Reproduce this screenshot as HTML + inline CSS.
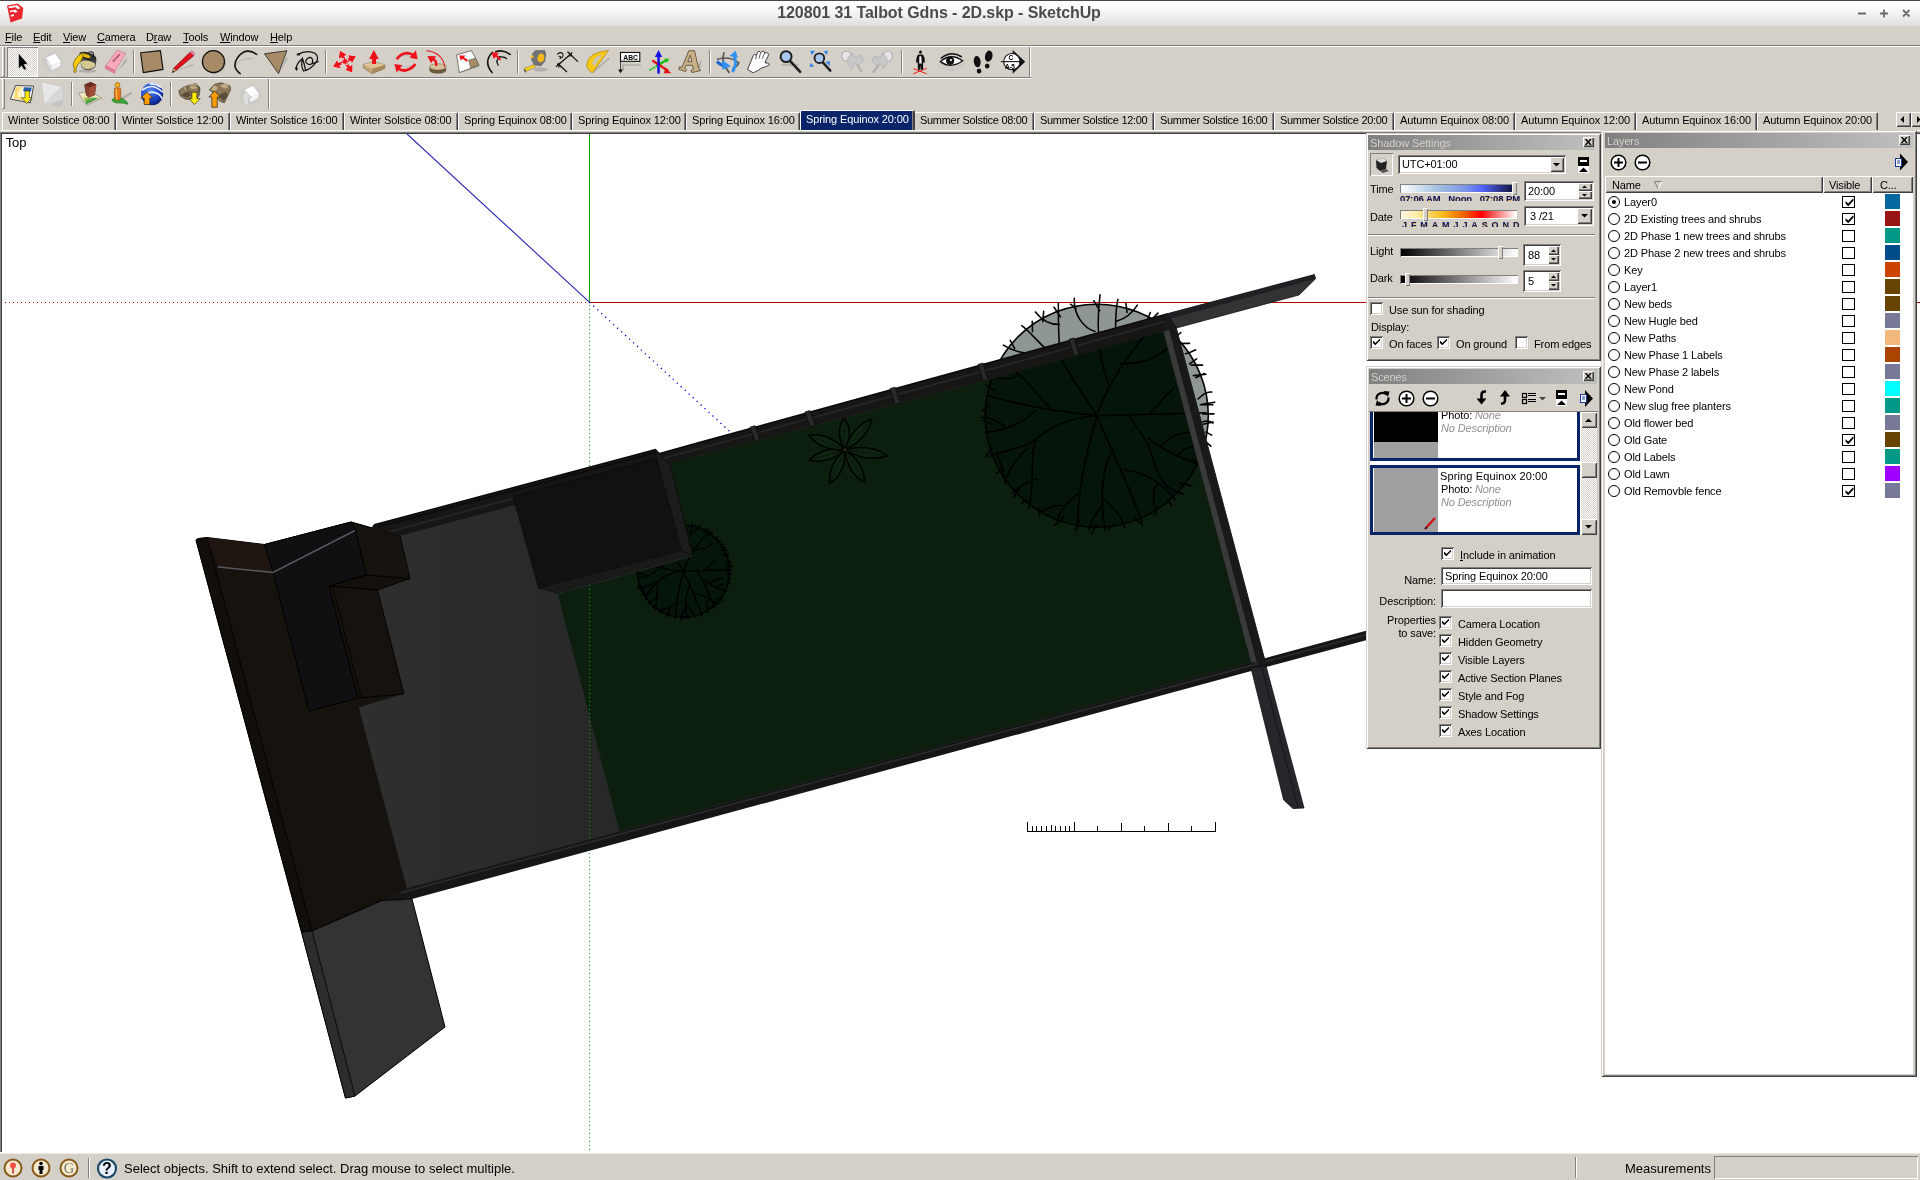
<!DOCTYPE html>
<html lang="en">
<head>
<meta charset="utf-8">
<title>120801 31 Talbot Gdns - 2D.skp - SketchUp</title>
<style>
*{box-sizing:border-box;margin:0;padding:0}
html,body{width:1920px;height:1180px;overflow:hidden;background:#d4d0c8}
#root{position:absolute;left:0;top:0;width:1920px;height:1180px;will-change:transform}
body{position:relative;font-family:"Liberation Sans",sans-serif;font-size:11px;color:#000;line-height:13px;letter-spacing:-0.12px}
.abs{position:absolute}
.t{position:absolute;white-space:nowrap;line-height:13px;height:13px}
u{text-decoration:underline;text-underline-offset:1px}
/* title bar */
#title{position:absolute;left:0;top:0;width:1920px;height:26px;background:linear-gradient(#fff 0,#fdfdfd 20%,#efefef 60%,#dedede 100%);border-top:1px solid #484848}
#title .cap{position:absolute;left:0;width:1878px;top:3px;text-align:center;font-weight:bold;font-size:16px;line-height:18px;color:#4b4b4b;letter-spacing:-0.08px}
/* menu */
#menu{position:absolute;left:0;top:26px;width:1920px;height:20px;background:#d4d0c8}
#menu span{position:absolute;top:5px;font-size:11px;line-height:13px}
.groove{position:absolute;left:0;width:1920px;height:2px;border-top:1px solid #808080;border-bottom:1px solid #fff}
.vsep{position:absolute;width:2px;border-left:1px solid #808080;border-right:1px solid #fff}
.raised{box-shadow:inset 1px 1px #fff,inset -1px -1px #404040,inset 2px 2px #d4d0c8,inset -2px -2px #808080;background:#d4d0c8}
.raised1{box-shadow:inset 1px 1px #fff,inset -1px -1px #808080;background:#d4d0c8}
.sunken{box-shadow:inset 1px 1px #808080,inset -1px -1px #fff,inset 2px 2px #404040,inset -2px -2px #d4d0c8;background:#fff}
.sunken1{box-shadow:inset 1px 1px #808080,inset -1px -1px #fff}
.panel{position:absolute;background:#d4d0c8;box-shadow:inset 1px 1px #d4d0c8,inset -1px -1px #404040,inset 2px 2px #fff,inset -2px -2px #808080}
.ptitle{position:absolute;height:15px;background:linear-gradient(90deg,#808080,#c0c0c0);color:#d4d0c8;font-size:11px;line-height:17px;padding-left:2px;overflow:hidden}
.xbtn{position:absolute;width:11px;height:10px;background:#d4d0c8;box-shadow:inset 1px 1px #fff,inset -1px -1px #404040,inset -2px -2px #808080}
.cb{position:absolute;width:13px;height:13px;background:#fff;box-shadow:inset 1px 1px #808080,inset -1px -1px #fff,inset 2px 2px #404040,inset -2px -2px #d4d0c8}
.cb svg,.lcb svg{position:absolute;left:3px;top:3px}
.lcb{position:absolute;width:13px;height:12px;background:#fff;border:1px solid #000}
.lcb svg{left:2px;top:1px}
.sw{position:absolute;left:1885px;width:15px;height:15px}
.rad{position:absolute;left:1608px;width:12px;height:12px;border:1px solid #000;border-radius:50%;background:#fff}
.rad.on::after{content:"";position:absolute;left:3px;top:3px;width:4px;height:4px;border-radius:50%;background:#000}
.tab{position:absolute;top:112px;height:18px;background:#d4d0c8;border-top:1px solid #fff;border-left:1px solid #fff;border-right:1px solid #404040;box-shadow:inset -1px 0 #808080;border-radius:2px 2px 0 0;padding-left:5px;line-height:14px}
.tab.sel{top:110px;height:20px;background:#0a246a;color:#fff;border:1px solid #fff;border-right:2px solid #404040;border-bottom:none;z-index:2;padding-top:1px;padding-left:5px}
.tab.su{letter-spacing:-0.3px}
.ico{position:absolute;width:24px;height:24px}
.spinb{position:absolute;width:11px;background:#d4d0c8;box-shadow:inset 1px 1px #fff,inset -1px -1px #404040,inset -2px -2px #808080}
</style>
</head>
<body>
<div id="root">
<svg class="abs" style="left:0;top:0" width="1920" height="1180" viewBox="0 0 1920 1180">
<defs><clipPath id="vp"><rect x="2" y="134" width="1918" height="1018"/></clipPath>
<clipPath id="lawnc"><polygon points="667.0,463.5 700.0,455.6 1000.0,376.7 1163.6,331.4 1251.0,662.0 620.0,831.0 558.0,593.0 692.7,555.6 669.0,466.0"/></clipPath>
<linearGradient id="pav" x1="0" y1="0" x2="1" y2="0"><stop offset="0" stop-color="#2f2f2f"/><stop offset="1" stop-color="#272727"/></linearGradient>
</defs>
<rect x="0" y="132" width="1920" height="1021" fill="#fff"/>
<g clip-path="url(#vp)">
<line x1="589.5" y1="134" x2="589.5" y2="302" stroke="#00a000" stroke-width="1"/>
<line x1="590" y1="302.5" x2="1920" y2="302.5" stroke="#b40000" stroke-width="1"/>
<line x1="590" y1="302.5" x2="2" y2="302.5" stroke="#d00000" stroke-width="1" stroke-dasharray="1 3"/>
<line x1="407.1" y1="134" x2="589.4" y2="302.2" stroke="#2424b4" stroke-width="1.1"/>
<line x1="589.4" y1="302.2" x2="730" y2="431.7" stroke="#0808c8" stroke-width="1.4" stroke-dasharray="1.2 4.2"/>
<g transform="translate(1096.8,415.7) scale(0.22895) translate(-598,-593)" fill="none" stroke="#000" stroke-width="6.77" stroke-linecap="round"><circle cx="598" cy="593" r="487" fill="#8f9793"/><path d="M598,593C630,500 680,400 790,262S880,195 905,175M650,455C620,380 590,250 612,65M700,365C780,370 860,340 905,300M598,593C540,500 450,380 440,330S430,200 430,100M598,593C500,580 350,570 120,505M598,593C480,600 380,650 340,690S330,900 300,1000M340,690C280,740 200,740 130,770M410,575C350,520 300,440 240,400M330,570C280,620 200,660 110,665M598,593C570,700 520,850 512,1085M598,593C640,700 720,850 795,1055M670,740C620,820 610,950 635,1095M598,593C700,590 900,585 1075,580M740,595C800,680 820,700 850,800S920,920 975,935M830,585C870,540 900,500 935,470M820,690C900,750 960,780 1030,800M720,830C800,840 880,880 940,960M880,725C920,680 960,670 1010,665M950,770C970,740 1000,730 1020,728M850,990C840,930 850,900 865,890M345,1020C400,980 430,985 450,985M425,1050C440,1000 480,960 515,935M565,1090C580,1040 600,1010 615,995M720,1080C700,1020 660,980 625,955M230,930C260,900 300,880 335,870M195,880C220,820 260,760 300,735M160,760C180,800 190,830 200,890M95,600C140,600 170,620 195,640M150,420C200,440 240,430 255,415M500,80C495,150 540,210 590,225M690,85C680,130 680,170 680,215M775,110C750,150 720,170 685,180M330,140C360,180 400,195 435,195M270,200C300,220 340,270 375,300M190,285C230,310 260,315 280,318M865,145L845,165M965,230L945,245M1030,305C1010,315 1000,320 985,322M1060,372L1010,372M1075,412L1020,418M1100,490C1080,485 1060,500 1040,520M1105,545L1050,545M1110,585L1060,585M1105,625C1090,615 1075,615 1060,620M1100,678L1075,665M1053,689L1096,726M1017,785L1053,800M960,888L1014,900M906,957L924,985M860,992L853,1028M763,1042L797,1068M668,1067L649,1089M597,1070L574,1111M523,1047L505,1094M457,1031L414,1072M347,996L348,1033M289,961L269,976M258,912L237,947M189,826L160,844M139,735L112,774M137,628L99,613M131,548L99,572M151,483L114,458M192,376L148,362M239,299L220,264M317,226L316,181M362,182L366,137M439,161L411,119M508,124L483,106M611,134L585,91M730,142L725,102M815,184L832,142M864,217L887,185M959,278L1003,277M1003,367L1034,345M1030,427L1068,409M1058,543L1113,534M1062,630L1106,621"/></g>
<polygon points="196.0,540.0 198.0,538.5 207.0,537.5 264.5,544.5 351.0,522.0 372.0,528.0 400.0,536.0 410.0,578.5 377.5,590.0 404.0,694.0 359.0,707.5 407.0,888.0 382.0,900.0 312.0,931.0 301.5,932.0" fill="#16120d" stroke="#000" stroke-width="1"/>
<polygon points="196.0,540.0 207.0,537.5 312.0,931.0 301.5,932.0" fill="#120e0a" stroke="#000" stroke-width="0.8"/>
<polygon points="207.0,537.5 264.5,544.5 273.0,572.5 218.0,567.0" fill="#1f1611"/>
<polygon points="400.0,536.0 515.0,505.0 513.0,496.5 538.5,587.8 558.0,593.0 620.0,831.0 407.0,888.0 359.0,707.5 404.0,694.0 377.5,590.0 410.0,578.5" fill="url(#pav)" stroke="#292929" stroke-width="1"/>
<polygon points="667.0,463.5 700.0,455.6 1000.0,376.7 1163.6,331.4 1251.0,662.0 620.0,831.0 558.0,593.0 692.7,555.6 669.0,466.0" fill="#0c1f0e" stroke="#0c1f0e" stroke-width="1"/>
<line x1="589.5" y1="305" x2="589.5" y2="1153" stroke="#00b400" stroke-width="1" stroke-dasharray="1 3"/>
<g clip-path="url(#lawnc)">
<g transform="translate(1096.8,415.7) scale(0.22895) translate(-598,-593)" fill="none" stroke="#000" stroke-width="6.77" stroke-linecap="round"><circle cx="598" cy="593" r="487" fill="#06150a"/><path d="M598,593C630,500 680,400 790,262S880,195 905,175M650,455C620,380 590,250 612,65M700,365C780,370 860,340 905,300M598,593C540,500 450,380 440,330S430,200 430,100M598,593C500,580 350,570 120,505M598,593C480,600 380,650 340,690S330,900 300,1000M340,690C280,740 200,740 130,770M410,575C350,520 300,440 240,400M330,570C280,620 200,660 110,665M598,593C570,700 520,850 512,1085M598,593C640,700 720,850 795,1055M670,740C620,820 610,950 635,1095M598,593C700,590 900,585 1075,580M740,595C800,680 820,700 850,800S920,920 975,935M830,585C870,540 900,500 935,470M820,690C900,750 960,780 1030,800M720,830C800,840 880,880 940,960M880,725C920,680 960,670 1010,665M950,770C970,740 1000,730 1020,728M850,990C840,930 850,900 865,890M345,1020C400,980 430,985 450,985M425,1050C440,1000 480,960 515,935M565,1090C580,1040 600,1010 615,995M720,1080C700,1020 660,980 625,955M230,930C260,900 300,880 335,870M195,880C220,820 260,760 300,735M160,760C180,800 190,830 200,890M95,600C140,600 170,620 195,640M150,420C200,440 240,430 255,415M500,80C495,150 540,210 590,225M690,85C680,130 680,170 680,215M775,110C750,150 720,170 685,180M330,140C360,180 400,195 435,195M270,200C300,220 340,270 375,300M190,285C230,310 260,315 280,318M865,145L845,165M965,230L945,245M1030,305C1010,315 1000,320 985,322M1060,372L1010,372M1075,412L1020,418M1100,490C1080,485 1060,500 1040,520M1105,545L1050,545M1110,585L1060,585M1105,625C1090,615 1075,615 1060,620M1100,678L1075,665M1053,689L1096,726M1017,785L1053,800M960,888L1014,900M906,957L924,985M860,992L853,1028M763,1042L797,1068M668,1067L649,1089M597,1070L574,1111M523,1047L505,1094M457,1031L414,1072M347,996L348,1033M289,961L269,976M258,912L237,947M189,826L160,844M139,735L112,774M137,628L99,613M131,548L99,572M151,483L114,458M192,376L148,362M239,299L220,264M317,226L316,181M362,182L366,137M439,161L411,119M508,124L483,106M611,134L585,91M730,142L725,102M815,184L832,142M864,217L887,185M959,278L1003,277M1003,367L1034,345M1030,427L1068,409M1058,543L1113,534M1062,630L1106,621"/></g>
<g transform="translate(683.5,571.2) scale(0.09446) translate(-598,-593)" fill="none" stroke="#000" stroke-width="14.29" stroke-linecap="round"><circle cx="598" cy="593" r="487" fill="#06150a"/><path d="M598,593C630,500 680,400 790,262S880,195 905,175M650,455C620,380 590,250 612,65M700,365C780,370 860,340 905,300M598,593C540,500 450,380 440,330S430,200 430,100M598,593C500,580 350,570 120,505M598,593C480,600 380,650 340,690S330,900 300,1000M340,690C280,740 200,740 130,770M410,575C350,520 300,440 240,400M330,570C280,620 200,660 110,665M598,593C570,700 520,850 512,1085M598,593C640,700 720,850 795,1055M670,740C620,820 610,950 635,1095M598,593C700,590 900,585 1075,580M740,595C800,680 820,700 850,800S920,920 975,935M830,585C870,540 900,500 935,470M820,690C900,750 960,780 1030,800M720,830C800,840 880,880 940,960M880,725C920,680 960,670 1010,665M950,770C970,740 1000,730 1020,728M850,990C840,930 850,900 865,890M345,1020C400,980 430,985 450,985M425,1050C440,1000 480,960 515,935M565,1090C580,1040 600,1010 615,995M720,1080C700,1020 660,980 625,955M230,930C260,900 300,880 335,870M195,880C220,820 260,760 300,735M160,760C180,800 190,830 200,890M95,600C140,600 170,620 195,640M150,420C200,440 240,430 255,415M500,80C495,150 540,210 590,225M690,85C680,130 680,170 680,215M775,110C750,150 720,170 685,180M330,140C360,180 400,195 435,195M270,200C300,220 340,270 375,300M190,285C230,310 260,315 280,318M865,145L845,165M965,230L945,245M1030,305C1010,315 1000,320 985,322M1060,372L1010,372M1075,412L1020,418M1100,490C1080,485 1060,500 1040,520M1105,545L1050,545M1110,585L1060,585M1105,625C1090,615 1075,615 1060,620M1100,678L1075,665M1053,689L1096,726M1017,785L1053,800M960,888L1014,900M906,957L924,985M860,992L853,1028M763,1042L797,1068M668,1067L649,1089M597,1070L574,1111M523,1047L505,1094M457,1031L414,1072M347,996L348,1033M289,961L269,976M258,912L237,947M189,826L160,844M139,735L112,774M137,628L99,613M131,548L99,572M151,483L114,458M192,376L148,362M239,299L220,264M317,226L316,181M362,182L366,137M439,161L411,119M508,124L483,106M611,134L585,91M730,142L725,102M815,184L832,142M864,217L887,185M959,278L1003,277M1003,367L1034,345M1030,427L1068,409M1058,543L1113,534M1062,630L1106,621"/></g>
</g>
<path d="M845,449.8Q854.4,431.9 843.9,417.8Q834.4,432.6 845,449.8Z" fill="#0e2310" stroke="#000" stroke-width="1.5"/><path d="M845,449.8L843.9,417.8" stroke="#06140a" stroke-width="0.8"/><path d="M845,449.8Q867.3,439.3 871.9,418.9Q852.2,426.2 845,449.8Z" fill="#0e2310" stroke="#000" stroke-width="1.5"/><path d="M845,449.8L871.9,418.9" stroke="#06140a" stroke-width="0.8"/><path d="M845,449.8Q867.0,463.0 887.6,455.8Q869.8,443.2 845,449.8Z" fill="#0e2310" stroke="#000" stroke-width="1.5"/><path d="M845,449.8L887.6,455.8" stroke="#06140a" stroke-width="0.8"/><path d="M845,449.8Q847.2,472.9 864.6,482.4Q864.3,462.6 845,449.8Z" fill="#0e2310" stroke="#000" stroke-width="1.5"/><path d="M845,449.8L864.6,482.4" stroke="#06140a" stroke-width="0.8"/><path d="M845,449.8Q827.6,464.3 830.0,483.6Q845.9,472.5 845,449.8Z" fill="#0e2310" stroke="#000" stroke-width="1.5"/><path d="M845,449.8L830.0,483.6" stroke="#06140a" stroke-width="0.8"/><path d="M845,449.8Q822.7,445.8 809.4,460.0Q828.2,465.0 845,449.8Z" fill="#0e2310" stroke="#000" stroke-width="1.5"/><path d="M845,449.8L809.4,460.0" stroke="#06140a" stroke-width="0.8"/><path d="M845,449.8Q828.9,432.5 808.8,435.2Q821.4,451.0 845,449.8Z" fill="#0e2310" stroke="#000" stroke-width="1.5"/><path d="M845,449.8L808.8,435.2" stroke="#06140a" stroke-width="0.8"/>
<circle cx="845" cy="449.8" r="1.5" fill="#3a2a10"/>
<polygon points="264.5,544.5 351.0,522.0 355.5,530.0 366.5,575.0 329.0,586.0 358.0,698.0 309.0,711.0 273.0,572.5" fill="#101012" stroke="#000" stroke-width="1"/>
<polyline points="218.0,567.0 273.0,572.5 355.0,530.5" fill="none" stroke="#555a5e" stroke-width="1.5"/>
<polygon points="329.0,586.0 366.5,575.0 410.0,578.5 377.5,590.0" fill="#14100c" stroke="#000" stroke-width="0.8"/>
<polygon points="329.0,586.0 377.5,590.0 404.0,694.0 358.0,698.0" fill="#17120e" stroke="#000" stroke-width="0.8"/>
<polygon points="351.0,522.0 372.0,528.0 400.0,536.0 410.0,578.5 366.5,575.0 355.5,530.0" fill="#17130e" stroke="#000" stroke-width="0.8"/>
<line x1="332.5" y1="586" x2="361" y2="697" stroke="#000" stroke-width="0.8"/>
<polygon points="372.0,528.5 374.6,524.7 655.4,449.7 659.0,453.6 700.0,442.3 1168.0,313.6 1163.6,331.4 1000.0,376.7 700.0,455.6 400.0,536.0" fill="#171614"/>
<polyline points="390.0,531.5 700.0,448.5 1165.0,321.5" fill="none" stroke="#242424" stroke-width="2"/>
<polyline points="378.0,527.0 655.0,452.8" fill="none" stroke="#050505" stroke-width="1"/>
<polyline points="372.0,528.5 374.6,524.7 655.4,449.7 659.0,453.6 700.0,442.3 1168.0,313.6" fill="none" stroke="#0a0a0a" stroke-width="1.5"/>
<polygon points="750.0,427.2 755.0,425.7 760.0,439.6 755.0,441.1" fill="#2a2a2a" stroke="#0a0a0a" stroke-width="0.8"/>
<polygon points="805.0,412.1 810.0,410.6 815.0,425.1 810.0,426.6" fill="#2a2a2a" stroke="#0a0a0a" stroke-width="0.8"/>
<polygon points="890.0,388.7 895.0,387.2 900.0,402.8 895.0,404.3" fill="#2a2a2a" stroke="#0a0a0a" stroke-width="0.8"/>
<polygon points="978.0,364.5 983.0,363.0 988.0,379.6 983.0,381.1" fill="#2a2a2a" stroke="#0a0a0a" stroke-width="0.8"/>
<polygon points="1069.0,339.5 1074.0,338.0 1079.0,354.6 1074.0,356.1" fill="#2a2a2a" stroke="#0a0a0a" stroke-width="0.8"/>
<polygon points="656.3,458.6 655.4,449.7 670.7,466.6 692.7,555.6 681.7,550.5" fill="#1c1c1c" stroke="#0a0a0a" stroke-width="0.8"/>
<polygon points="538.5,587.8 681.7,550.5 692.7,555.6 558.0,593.0" fill="#1a1a19" stroke="#0a0a0a" stroke-width="0.8"/>
<polygon points="513.0,496.5 656.3,458.6 681.7,550.5 538.5,587.8" fill="#111" stroke="#0a0a0a" stroke-width="0.8"/>
<line x1="558" y1="593.4" x2="692.7" y2="556" stroke="#2e3038" stroke-width="0.8"/>
<polygon points="407.0,888.0 1251.0,662.0 1365.0,631.0 1367.0,631.0 1367.0,640.0 1266.0,667.0 412.0,899.0 382.0,901.0 382.0,899.0" fill="#161616"/>
<line x1="400" y1="893" x2="1367" y2="634.5" stroke="#2c2c2c" stroke-width="1.5"/>
<polygon points="301.5,932.0 312.0,931.0 382.0,900.5 412.0,899.0 445.0,1027.0 355.0,1096.0 345.5,1098.0" fill="#333" stroke="#000" stroke-width="1"/>
<polygon points="301.5,932.0 312.0,931.0 355.0,1096.0 345.5,1098.0" fill="#2d2d2d" stroke="#000" stroke-width="0.8"/>
<polygon points="1163.6,331.4 1168.0,313.6 1176.3,328.0 1266.0,664.4 1251.0,662.0" fill="#191919" stroke="#191919" stroke-width="1"/>
<polygon points="1163.6,331.4 1169.0,330.0 1257.0,663.0 1251.0,662.0" fill="#3a3a3a"/>
<polygon points="1251.0,668.0 1266.0,666.0 1304.0,808.0 1293.0,808.5 1283.7,800.0" fill="#26272c" stroke="#111" stroke-width="0.8"/>
<line x1="1262" y1="668" x2="1298" y2="808" stroke="#15161a" stroke-width="1"/>
<polygon points="1167.8,313.6 1314.4,274.6 1315.6,278.8 1299.0,295.0 1176.3,328.0" fill="#333" stroke="#111" stroke-width="0.8"/>
<polygon points="1167.8,313.6 1314.4,274.6 1315.6,278.8 1171.0,318.5" fill="#1f2024"/>
<path d="M1027.5,822V831.5H1215.5V822M1032.2,826V831M1036.9,826V831M1041.6,826V831M1046.3,826V831M1051.0,824.5V831M1055.7,826V831M1060.4,826V831M1065.1,826V831M1069.8,826V831M1074.5,822V831M1097.5,825.5V831M1121.5,823V831M1144.5,825.5V831M1168.5,823V831M1191.5,825.5V831" fill="none" stroke="#000" stroke-width="1" shape-rendering="crispEdges"/>
</g>
<text x="5.7" y="147" font-family="Liberation Sans,sans-serif" font-size="13" fill="#000">Top</text>
<rect x="0" y="132" width="1920" height="1" fill="#808080"/><rect x="1" y="133" width="1919" height="1" fill="#404040"/>
<rect x="0" y="132" width="1" height="1021" fill="#808080"/><rect x="1" y="133" width="1" height="1020" fill="#404040"/>
</svg>
<div id="title"><div class="cap">120801 31 Talbot Gdns - 2D.skp - SketchUp</div>
<svg class="abs" style="left:5px;top:1px" width="20" height="21" viewBox="0 0 20 21"><path d="M2,3.5 12.5,1.5 18.3,6 17,16.5 5.5,20.5Z" fill="#e8262b"/><path d="M3.5,4.5 12,3 15.5,6.2 12.5,7.2 10.8,5.2 3.8,6.2Z M4.8,8.8 10.5,7.8 12.8,10 9.5,10.8 8.6,9.6 5,10.2Z M5.6,13 8.8,12.2 9,14 5.9,14.8Z" fill="#fff"/></svg>
<svg class="abs" style="left:1850px;top:4.5px" width="64" height="16" viewBox="0 0 64 16"><path d="M8,7.5H16M30,7.5H38M34,3.5V11.5M53,4 59.5,10.5M59.5,4 53,10.5" stroke="#6a6a6a" stroke-width="1.8" fill="none"/></svg>
</div>
<div id="menu">
<span style="left:5px"><u>F</u>ile</span>
<span style="left:33px"><u>E</u>dit</span>
<span style="left:63px"><u>V</u>iew</span>
<span style="left:97px"><u>C</u>amera</span>
<span style="left:146px">D<u>r</u>aw</span>
<span style="left:183px"><u>T</u>ools</span>
<span style="left:220px"><u>W</u>indow</span>
<span style="left:270px"><u>H</u>elp</span>
</div>
<div class="groove" style="top:45px"></div>
<div class="groove" style="top:77px;width:1031px"></div>
<div class="abs" style="left:2px;top:47px;width:3px;height:30px;border-left:1px solid #fff;border-right:1px solid #808080;border-bottom:1px solid #808080"></div>
<div class="abs" style="left:2px;top:79px;width:3px;height:30px;border-left:1px solid #fff;border-right:1px solid #808080;border-bottom:1px solid #808080"></div>
<div class="vsep" style="left:133px;top:50px;height:24px"></div>
<div class="vsep" style="left:325px;top:50px;height:24px"></div>
<div class="vsep" style="left:517px;top:50px;height:24px"></div>
<div class="vsep" style="left:709px;top:50px;height:24px"></div>
<div class="vsep" style="left:901px;top:50px;height:24px"></div>
<div class="vsep" style="left:1029px;top:47px;height:30px"></div>
<div class="vsep" style="left:71px;top:82px;height:24px"></div>
<div class="vsep" style="left:170px;top:82px;height:24px"></div>
<div class="vsep" style="left:268px;top:79px;height:30px"></div>
<div class="abs" style="left:7px;top:47px;width:31px;height:30px;background:#eceae6;box-shadow:inset 1px 1px #808080,inset -1px -1px #fff"></div>
<div class="tab" style="left:2px;width:114px">Winter Solstice 08:00</div>
<div class="tab" style="left:116px;width:114px">Winter Solstice 12:00</div>
<div class="tab" style="left:230px;width:114px">Winter Solstice 16:00</div>
<div class="tab" style="left:344px;width:114px">Winter Solstice 08:00</div>
<div class="tab" style="left:458px;width:114px">Spring Equinox 08:00</div>
<div class="tab" style="left:572px;width:114px">Spring Equinox 12:00</div>
<div class="tab" style="left:686px;width:114px">Spring Equinox 16:00</div>
<div class="tab sel" style="left:800px;width:115px">Spring Equinox 20:00</div>
<div class="tab su" style="left:914px;width:120px">Summer Solstice 08:00</div>
<div class="tab su" style="left:1034px;width:120px">Summer Solstice 12:00</div>
<div class="tab su" style="left:1154px;width:120px">Summer Solstice 16:00</div>
<div class="tab su" style="left:1274px;width:120px">Summer Solstice 20:00</div>
<div class="tab" style="left:1394px;width:121px">Autumn Equinox 08:00</div>
<div class="tab" style="left:1515px;width:121px">Autumn Equinox 12:00</div>
<div class="tab" style="left:1636px;width:121px">Autumn Equinox 16:00</div>
<div class="tab" style="left:1757px;width:121px">Autumn Equinox 20:00</div>
<div class="abs" style="left:0;top:130px;width:1920px;height:1px;background:#fff"></div>
<div class="abs raised" style="left:1896px;top:112px;width:15px;height:15px"><svg class="abs" style="left:4px;top:4px" width="6" height="7"><path d="M4,0V7L0.5,3.5Z" fill="#000"/></svg></div>
<div class="abs raised" style="left:1911px;top:112px;width:15px;height:15px"><svg class="abs" style="left:5px;top:4px" width="6" height="7"><path d="M1,0V7L4.5,3.5Z" fill="#000"/></svg></div>
<svg class="abs" style="left:0;top:46px" width="1040" height="64" viewBox="0 46 1040 64">
<defs><pattern id="dith" width="2" height="2" patternUnits="userSpaceOnUse"><rect width="2" height="2" fill="#fff"/><rect width="1" height="1" fill="#d4d0c8"/><rect x="1" y="1" width="1" height="1" fill="#d4d0c8"/></pattern><radialGradient id="globe" cx="0.4" cy="0.35" r="0.7"><stop offset="0" stop-color="#5a8cf0"/><stop offset="0.6" stop-color="#1c44c8"/><stop offset="1" stop-color="#0a1a70"/></radialGradient><linearGradient id="mapg" x1="0" y1="0" x2="1" y2="1"><stop offset="0" stop-color="#f0d060"/><stop offset="0.5" stop-color="#40a040"/><stop offset="1" stop-color="#2060d0"/></linearGradient></defs>
<rect x="8" y="48" width="29" height="28" fill="url(#dith)"/>
<g transform="translate(0,46) scale(0.104167)">
<path d="M190,95 190,225 215,200 240,240 262,228 238,190 275,180Z" fill="#aaa" opacity="0.6"/>
<path d="M180,75 180,215 205,188 232,228 250,216 226,178 262,168Z" fill="#000" stroke="#fff" stroke-width="6" stroke-linejoin="round" paint-order="stroke"/>
<path d="M400,130 520,45 610,140 590,200 490,265 420,200Z" fill="#c8c8c8" opacity="0.7"/>
<path d="M445,110 530,75 582,150 492,188Z" fill="#fff"/><path d="M492,188 582,150 577,192 497,236Z" fill="#f4f4f4"/><path d="M445,110 492,188 497,236 455,170Z" fill="#e0e0e0"/>
<ellipse cx="840" cy="240" rx="85" ry="16" fill="#999" opacity="0.6"/>
<path d="M765,95 790,205 Q845,252 912,200 L922,125 Q850,60 765,95Z" fill="#4c4c4c" stroke="#1a1a1a" stroke-width="7"/>
<path d="M772,150 Q840,120 915,170 L910,200 Q845,245 792,203Z" fill="#d6ca92"/>
<ellipse cx="843" cy="98" rx="80" ry="30" transform="rotate(18 843 98)" fill="#3a3a3a" stroke="#1a1a1a" stroke-width="9"/><ellipse cx="820" cy="92" rx="48" ry="17" transform="rotate(18 820 92)" fill="#e8b800"/>
<path d="M850,60 Q915,35 890,120" fill="none" stroke="#1a1a1a" stroke-width="10"/>
<path d="M800,62 Q745,85 715,140 Q692,190 714,215 L710,250 Q722,264 731,246 L729,215 Q742,175 772,150 Q795,125 800,62Z" fill="#f6cc00" stroke="#5a4400" stroke-width="6"/>
<path d="M1108,262 1218,150 1215,105 1135,235Z" fill="#999" opacity="0.6"/>
<path d="M1125,40 1208,72 1105,238 1015,190Z" fill="#f6a8bc" stroke="#b06078" stroke-width="5" stroke-linejoin="round"/>
<path d="M1015,190 1105,238 1100,264 1008,214Z" fill="#e87c9a" stroke="#b06078" stroke-width="4" stroke-linejoin="round"/>
<path d="M1085,150 1150,78" stroke="#8a2038" stroke-width="16" stroke-dasharray="6 4"/>
<path d="M1390,262 1570,232 1560,215 1380,245Z" fill="#999" opacity="0.6"/>
<path d="M1350,65 1540,45 1565,225 1375,255Z" fill="#a68b66" stroke="#111" stroke-width="11" stroke-linejoin="round"/>
<path d="M1660,255 1860,185 1850,175Z" fill="#999" opacity="0.7"/>
<path d="M1822,62 1862,92 1690,235 1655,255 1668,212Z" fill="#e8101c" stroke="#400" stroke-width="5"/>
<path d="M1822,62 1840,45 1868,70 1862,92Z" fill="#f080b0" stroke="#803050" stroke-width="4"/>
<path d="M1668,212 1690,235 1655,255Z" fill="#e8c890" stroke="#222" stroke-width="4"/><path d="M1655,255 1662,240 1672,248Z" fill="#111"/>
<path d="M100,510 150,380 322,385 292,545Z" fill="#fff" stroke="#222" stroke-width="8" stroke-linejoin="round"/>
<path d="M150,395 215,390 190,460 235,520 130,505Z" fill="#f8dc70"/><path d="M165,440 205,400 215,470 175,500Z" fill="#fff4c0"/>
<path d="M228,395 305,398 298,440 222,435Z" fill="#2a60a8"/>
<path d="M240,432 282,432 282,497 308,497 256,552 208,497 240,497Z" fill="#ffee00" stroke="#222" stroke-width="6" stroke-linejoin="round"/>
<path d="M400,352 592,388 612,470 600,520 430,562Z" fill="#d8d8d8" stroke="#bbb" stroke-width="5"/><path d="M400,352 592,388 500,470 430,562Z" fill="#e6e6e6"/><path d="M500,560 600,520 590,580 520,580Z" fill="#c4c4c4"/>
<path d="M755,455 860,430 975,500 830,568Z" fill="#f0e8c0" stroke="#666" stroke-width="5"/>
<path d="M800,490 950,500 830,560Z" fill="url(#mapg)"/>
<path d="M812,372 870,348 922,372 908,470 850,492 828,470Z" fill="#8a3e2c" stroke="#3a1810" stroke-width="5"/><path d="M812,372 870,348 922,372 862,395Z" fill="#6a2c20"/><path d="M862,395 922,372 908,470 850,492Z" fill="#a04c38"/>
<path d="M1150,500 1260,440 1270,455 1170,520Z" fill="#999" opacity="0.6"/>
<path d="M1075,520 Q1085,490 1130,500 L1180,505 Q1235,545 1228,560 Q1180,545 1150,548 Q1090,550 1075,520Z" fill="#38a838" stroke="#1a6a1a" stroke-width="5"/>
<path d="M1100,405 1158,405 1160,470 1150,520 1108,520 1098,470Z" fill="#e87818" stroke="#8a3a00" stroke-width="5"/><path d="M1112,410 1125,410 1125,515 1114,515Z" fill="#f8c040"/>
<circle cx="1128" cy="375" r="24" fill="#f8b020" stroke="#8a4a00" stroke-width="5"/>
<circle cx="1460" cy="462" r="106" fill="url(#globe)"/>
<path d="M1370,420 Q1440,370 1500,400 Q1540,425 1560,440 M1385,470 Q1450,420 1520,460 Q1545,480 1555,500 M1440,365 Q1500,360 1540,395" fill="none" stroke="#e8f0ff" stroke-width="16" stroke-linecap="round"/>
<path d="M1410,442 1468,500 1438,500 1438,562 1384,562 1384,500 1352,500Z" fill="#ff9c00" stroke="#222" stroke-width="7" stroke-linejoin="round"/>
<path d="M1715,430 1760,395 1800,380 1880,360 1920,400 1915,470 1880,520 1780,510 1730,480Z" fill="#8a7858" stroke="#222" stroke-width="5"/>
<path d="M1760,395 1800,380 1840,420 1790,440Z M1815,370 1880,360 1900,400 1830,415Z" fill="#c0aa80"/><path d="M1740,470 1790,440 1840,470 1790,500Z" fill="#5a4c38"/>
<path d="M1842,440 1890,440 1890,505 1922,505 1866,562 1815,505 1842,505Z" fill="#ffee00" stroke="#222" stroke-width="6" stroke-linejoin="round"/>
</g>
<g transform="translate(190,46) scale(0.104167)">
<circle cx="238" cy="160" r="108" fill="#999" opacity="0.5"/>
<circle cx="225" cy="150" r="106" fill="#a68b66" stroke="#111" stroke-width="12"/>
<path d="M605,120 Q480,110 425,200" fill="none" stroke="#999" stroke-width="6"/>
<path d="M640,80 Q540,10 465,100 Q390,200 482,265" fill="none" stroke="#111" stroke-width="15" stroke-linecap="round"/>
<path d="M860,262 940,120 925,110Z" fill="#999" opacity="0.6"/>
<path d="M715,75 930,45 850,265Z" fill="#a68b66" stroke="#111" stroke-width="7" stroke-linejoin="round"/>
<path d="M1030,85 Q1120,30 1200,70 Q1250,110 1200,170 Q1150,230 1090,240 Q1060,190 1080,120 Q1100,180 1110,235 M1110,150 Q1120,110 1160,110 Q1190,130 1170,170 Q1140,190 1115,160 M1080,120 Q1020,170 1020,215 M1170,170 Q1200,160 1230,150" fill="none" stroke="#111" stroke-width="12" stroke-linecap="round"/>
<path d="M1005,205 1040,215 1020,240Z M1025,75 1060,65 1050,95Z" fill="#111"/>
<path d="M1495,132 1479,96 1504,84 1440,45 1428,119 1453,107 1470,143ZM1507,156 1543,138 1555,163 1592,98 1518,88 1530,113 1494,131ZM1485,170 1512,211 1489,227 1558,255 1559,180 1535,196 1508,155ZM1469,143 1423,163 1412,137 1372,200 1446,214 1434,188 1480,169Z" fill="#f01018" stroke="#fff" stroke-width="5" stroke-linejoin="round" paint-order="stroke"/>
<circle cx="1488" cy="150" r="20" fill="#f01018"/><circle cx="1470" cy="125" r="9" fill="#ddd"/><circle cx="1512" cy="132" r="9" fill="#ddd"/><circle cx="1505" cy="175" r="9" fill="#ddd"/><circle cx="1463" cy="168" r="9" fill="#ddd"/>
<path d="M1665,178 1760,150 1872,182 1870,215 1750,265 1667,212Z" fill="#c8a878" stroke="#5a4a30" stroke-width="5"/><path d="M1665,178 1760,150 1872,182 1750,218Z" fill="#e0c498"/><path d="M1750,218 1872,182 1870,215 1750,265Z" fill="#a88858"/>
<path d="M1765,38 1812,125 1786,125 1786,172 1748,172 1748,125 1720,125Z" fill="#f01018"/>
<path d="M-40,395 40,380 90,400 85,440 40,445 -20,440Z" fill="#8a7858" stroke="#222" stroke-width="5"/><path d="M-10,392 40,380 80,402 20,415Z" fill="#c0aa80"/>
<path d="M185,420 235,368 300,352 385,385 390,420 330,545 285,530 250,470Z" fill="#8a7858" stroke="#222" stroke-width="5"/>
<path d="M285,385 330,360 378,388 335,410Z M200,415 235,375 270,400 240,440Z" fill="#c0aa80"/><path d="M280,470 340,440 365,470 320,530Z" fill="#5a4c38"/>
<path d="M236,432 292,490 262,490 262,588 210,588 210,490 182,490Z" fill="#ff9c00" stroke="#222" stroke-width="7" stroke-linejoin="round"/>
<path d="M480,440 600,360 690,440 680,510 580,570 500,560Z" fill="#c8c8c8" opacity="0.6"/>
<path d="M525,420 605,385 660,455 575,490Z" fill="#fff"/><path d="M575,490 660,455 655,500 580,540Z" fill="#f4f4f4"/>
<path d="M540,440 592,495 565,495 565,570 512,570 512,495 485,495Z" fill="#dcdcdc" stroke="#bbb" stroke-width="5"/>
</g>
<g transform="translate(380,46) scale(0.104167)">
<path d="M160,125 Q240,30 330,95" fill="none" stroke="#f01018" stroke-width="26"/><path d="M345,40 360,128 285,112Z" fill="#f01018"/>
<path d="M340,175 Q260,270 170,215" fill="none" stroke="#f01018" stroke-width="26"/><path d="M160,255 138,172 215,185Z" fill="#f01018"/>
<path d="M200,100 Q250,80 300,105 M300,190 Q250,215 205,195" fill="none" stroke="#789" stroke-width="5" opacity="0.6"/>
<ellipse cx="555" cy="235" rx="80" ry="30" fill="#6a5a40"/><path d="M475,200 475,235 635,235 635,200Z" fill="#6a5a40"/><ellipse cx="555" cy="200" rx="80" ry="30" fill="#d8c098" stroke="#6a5a40" stroke-width="4"/>
<path d="M445,45 Q600,60 622,200" fill="none" stroke="#e01018" stroke-width="10"/>
<path d="M540,190 Q545,140 505,120" fill="none" stroke="#f01018" stroke-width="24"/><path d="M455,95 540,98 490,165Z" fill="#f01018"/>
<path d="M770,258 955,200 950,185 765,245Z" fill="#999" opacity="0.5"/>
<path d="M735,85 880,45 950,185 762,255Z" fill="#fff" stroke="#333" stroke-width="6" stroke-linejoin="round"/>
<path d="M850,135 915,118 950,185 870,210Z" fill="#a68b66" stroke="#333" stroke-width="4"/>
<path d="M760,92 820,90 805,108 845,135 832,150 792,122 775,140Z" fill="#f01018"/>
<path d="M1075,255 Q990,150 1080,60 M1250,80 Q1180,30 1110,55" fill="none" stroke="#111" stroke-width="15" stroke-linecap="round"/>
<path d="M1135,185 Q1105,140 1150,100 M1215,120 Q1190,100 1160,105" fill="none" stroke="#111" stroke-width="12" stroke-linecap="round"/>
<path d="M1070,60 1140,68 1125,88 1165,125 1150,140 1112,104 1092,125Z" fill="#f01018"/>
<ellipse cx="1540" cy="225" rx="70" ry="20" fill="#999" opacity="0.6"/>
<path d="M1465,75 1490,45 1580,42 1592,80 1580,150 1545,190 1480,180 1455,130Z" fill="#707478" stroke="#444" stroke-width="5"/>
<ellipse cx="1545" cy="115" rx="32" ry="42" fill="#f8b818" transform="rotate(15 1545 115)"/><circle cx="1462" cy="102" r="14" fill="#f8b818"/>
<path d="M1385,215 1475,180 1495,200 1400,245Z" fill="#f8d020" stroke="#6a5a00" stroke-width="4"/><path d="M1385,215 1400,245 1398,262 1382,232Z" fill="#444"/>
<path d="M1690,200 1840,70 M1800,55 1900,150 M1705,165 1795,250" fill="none" stroke="#111" stroke-width="12"/>
<path d="M1700,175 1740,205 M1725,160 1715,210 M1810,60 1850,100 M1845,55 1822,105" fill="none" stroke="#111" stroke-width="9"/>
<path d="M1700,80 Q1735,50 1755,75 Q1765,110 1730,118 Q1745,95 1715,100" fill="none" stroke="#111" stroke-width="10"/>
</g>
<g transform="translate(570,46) scale(0.104167)">
<path d="M225,258 385,120 370,110 215,245Z" fill="#999" opacity="0.6"/>
<path d="M160,180 Q170,60 370,42 L215,258 Q165,230 160,180Z" fill="#f8c818" stroke="#a07800" stroke-width="6"/>
<path d="M215,165 Q235,100 310,85 L240,190 Q220,185 215,165Z" fill="#c8c4b8"/>
<path d="M500,175 680,175 680,190 520,190 520,235 500,235Z" fill="#999" opacity="0.6"/>
<rect x="485" y="62" width="185" height="85" fill="#fff" stroke="#111" stroke-width="11"/>
<path d="M485,147V235" stroke="#111" stroke-width="7"/><path d="M462,225 508,225 485,262Z" fill="#111"/>
</g>
<text x="623.3" y="59.800" font-family="Liberation Sans,sans-serif" font-size="6.8" font-weight="bold" fill="#000" letter-spacing="0">ABC</text>
<g transform="translate(570,46) scale(0.104167)">
<path d="M762,235 935,130" stroke="#10c010" stroke-width="20" stroke-dasharray="16 8"/><path d="M850,180 935,130" stroke="#10c010" stroke-width="20"/><path d="M905,120 950,122 935,160Z" fill="#10c010"/>
<path d="M790,140 945,240" stroke="#e01010" stroke-width="22"/><path d="M915,215 975,262 900,262Z" fill="#e01010"/>
<path d="M850,265V95" stroke="#1010e0" stroke-width="24"/><path d="M850,38 885,105 815,105Z" fill="#1010e0"/>
<path d="M1200,240 1265,120 1255,200 1250,245Z" fill="#999" opacity="0.6"/>
<path d="M1050,200 1075,205 1140,45 1195,45 1235,215 1255,235 1170,255 1160,235 1185,225 1175,185 1115,185 1100,215 1120,225 1110,245 1045,225Z M1130,150 1170,150 1155,90Z" fill="#c8b088" stroke="#4a3a20" stroke-width="7" fill-rule="evenodd" stroke-linejoin="round"/>
<path d="M1410,130 Q1520,90 1620,160 Q1610,200 1560,215" fill="none" stroke="#555" stroke-width="16"/>
<path d="M1480,60 Q1440,150 1530,258" fill="none" stroke="#555" stroke-width="16"/>
<path d="M1560,250 Q1610,160 1575,100" fill="none" stroke="#3090f0" stroke-width="28"/><path d="M1530,95 1590,45 1612,112Z" fill="#3090f0"/>
<path d="M1410,150 Q1440,180 1480,190" fill="none" stroke="#2060d0" stroke-width="28"/><path d="M1460,135 1545,195 1462,228Z" fill="#3090f0"/>
</g>
<g transform="translate(740,46) scale(0.15625)">
<path d="M48,150 Q70,100 85,60 Q95,45 105,62 L112,40 Q122,25 132,42 L142,35 Q155,28 158,45 L172,42 Q188,45 180,65 Q165,90 160,108 Q175,105 190,118 Q170,135 140,140 Q110,160 85,172Z" fill="#fff" stroke="#333" stroke-width="6" stroke-linejoin="round"/>
<path d="M105,62 100,85 M132,42 122,80 M158,45 142,82" stroke="#333" stroke-width="5"/>
<ellipse cx="320" cy="120" rx="60" ry="10" fill="#999" opacity="0.5"/>
<path d="M325,100 385,165" stroke="#222" stroke-width="17" stroke-linecap="round"/>
<circle cx="295" cy="68" r="35" fill="#a8c8f0" stroke="#222" stroke-width="13"/>
<path d="M530,105 578,158" stroke="#222" stroke-width="16" stroke-linecap="round"/>
<circle cx="508" cy="78" r="31" fill="#a8c8f0" stroke="#222" stroke-width="12"/>
<path d="M450,30 480,32 458,58Z M560,28 535,35 558,58Z M445,135 452,108 475,130Z M575,128 548,100 575,98Z" fill="#2a80f0"/>
<circle cx="682" cy="65" r="32" fill="#e4e4e4" stroke="#b8b8b8" stroke-width="9"/><path d="M745,110 778,165" stroke="#b0b0b0" stroke-width="14"/>
<path d="M690,75 720,45 730,70 775,60 790,95 760,125 735,110 715,150 690,120Z" fill="#c8c8c8" stroke="#aaa" stroke-width="4"/>
<circle cx="945" cy="65" r="32" fill="#e4e4e4" stroke="#b8b8b8" stroke-width="9"/><path d="M890,120 850,170" stroke="#b0b0b0" stroke-width="14"/>
<path d="M940,75 910,45 900,70 855,70 845,100 870,125 900,110 915,145 940,115Z" fill="#c8c8c8" stroke="#aaa" stroke-width="4"/>
<path d="M1108,178 1195,142 M1110,145 1195,178" stroke="#f01010" stroke-width="6"/>
<circle cx="1155" cy="40" r="9" fill="#111"/><path d="M1155,26V34" stroke="#111" stroke-width="4"/><path d="M1140,55 1170,55 Q1186,75 1182,108 L1172,104 1172,152 1157,152 1155,120 1153,152 1138,152 1138,104 1128,108 Q1124,75 1140,55Z" fill="#111"/><path d="M1148,66 1160,66 1163,112 1147,112Z" fill="#fff"/>
<ellipse cx="1355" cy="105" rx="75" ry="58" fill="#c8c8c8" opacity="0.7"/>
<path d="M1282,100 Q1350,40 1425,95 Q1350,150 1282,100Z" fill="#fff" stroke="#111" stroke-width="8"/>
<circle cx="1345" cy="95" r="26" fill="#111"/><circle cx="1350" cy="90" r="7" fill="#fff"/>
<path d="M1285,80 Q1350,25 1420,70" fill="none" stroke="#111" stroke-width="10"/>
<ellipse cx="1592" cy="65" rx="24" ry="36" transform="rotate(12 1592 65)" fill="#111"/><ellipse cx="1582" cy="128" rx="15" ry="16" fill="#111"/>
<ellipse cx="1518" cy="100" rx="22" ry="36" transform="rotate(-8 1518 100)" fill="#111"/><ellipse cx="1530" cy="160" rx="15" ry="16" fill="#111"/>
<path d="M1745,25 1825,100 1745,178Z" fill="#111"/>
<circle cx="1740" cy="100" r="52" fill="#fff" stroke="#111" stroke-width="7"/><path d="M1670,100H1800" stroke="#111" stroke-width="7"/>
</g>
<text x="1008.500" y="60" font-family="Liberation Sans,sans-serif" font-size="6.5" font-weight="bold" fill="#000">C</text>
<text x="1005" y="68.500" font-family="Liberation Sans,sans-serif" font-size="6.5" font-weight="bold" fill="#000" letter-spacing="-0.3">A-5</text>
</svg>
<div class="panel" style="left:1366px;top:133px;width:235px;height:228px"></div>
<div class="ptitle" style="left:1368px;top:135px;width:227px">Shadow Settings</div>
<div class="xbtn" style="left:1583px;top:137px"><svg class="abs" style="left:2px;top:2px" width="7" height="6"><path d="M0.5,0 6,6M6,0 0.5,6" stroke="#000" stroke-width="1.4"/></svg></div>
<div class="abs" style="left:1370px;top:153px;width:23px;height:23px;box-shadow:inset 1px 1px #808080,inset -1px -1px #fff"><svg class="abs" style="left:3px;top:3px" width="17" height="17" viewBox="0 0 17 17"><path d="M3,4 9,2 14,5 13,13 7,15 3.5,12Z" fill="#222"/><path d="M3,4 9,2 14,5 8,7Z" fill="#ddd"/><path d="M7,15 13,13 16,15 10,17Z" fill="#555"/></svg></div>
<div class="abs sunken" style="left:1398px;top:155px;width:168px;height:19px"></div>
<div class="t" style="left:1402px;top:158px;">UTC+01:00</div>
<div class="abs raised" style="left:1550px;top:157px;width:14px;height:15px"><svg class="abs" style="left:3px;top:6px" width="8" height="4"><path d="M0,0H7L3.5,3.5Z" fill="#000"/></svg></div>
<svg class="abs" style="left:1577px;top:156px" width="13" height="18" viewBox="0 0 13 18"><rect x="0.5" y="0.5" width="12" height="17" fill="#fff" stroke="#d4d0c8"/><rect x="1" y="1" width="11" height="9" fill="#000"/><rect x="3" y="4" width="7" height="2" fill="#fff"/><path d="M2,16H11L6.5,11.5Z" fill="#000"/></svg>
<div class="t" style="left:1370px;top:183px;">Time</div>
<div class="abs sunken1" style="left:1400px;top:184px;width:117px;height:9px;padding:1px"><div style="width:100%;height:100%;background:linear-gradient(90deg,#fff 0,#a8c4e0 30%,#7d97e6 55%,#5566ff 70%,#2a2f80 88%,#0a0c30 100%)"></div></div>
<div class="abs raised1" style="left:1512px;top:182px;width:5px;height:13px"></div>
<div class="abs" style="left:1400px;top:194px;width:122px;height:7px;overflow:hidden"><div class="t" style="left:0;top:0;font-size:9.5px;font-weight:bold;color:#0a1464;line-height:9px;text-shadow:0 1px #e0b040;letter-spacing:-0.1px;word-spacing:0">07:06 AM&nbsp;&nbsp; Noon&nbsp;&nbsp;&nbsp;07:08 PM</div></div>
<div class="abs sunken" style="left:1524px;top:181px;width:70px;height:20px"></div>
<div class="t" style="left:1528px;top:185px;">20:00</div>
<div class="spinb" style="left:1578px;top:183px;height:8px;width:14px"><svg class="abs" style="left:4px;top:2px" width="5" height="3"><path d="M0,3H5L2.5,0.5Z" fill="#000"/></svg></div>
<div class="spinb" style="left:1578px;top:191px;height:8px;width:14px"><svg class="abs" style="left:4px;top:3px" width="5" height="3"><path d="M0,0H5L2.5,2.5Z" fill="#000"/></svg></div>
<div class="t" style="left:1370px;top:211px;">Date</div>
<div class="abs sunken1" style="left:1400px;top:210px;width:117px;height:9px;padding:1px"><div style="width:100%;height:100%;background:linear-gradient(90deg,#fff8e0 0,#ffe9a0 15%,#f8c020 35%,#f06000 55%,#ff0000 70%,#ff8080 85%,#fff 100%)"></div></div>
<div class="abs raised1" style="left:1423px;top:208px;width:5px;height:13px"></div>
<div class="abs" style="left:1402px;top:221px;width:120px;height:6px;overflow:hidden"><div class="t" style="left:0;top:0;font-size:9px;font-weight:bold;color:#0a1464;line-height:9px;text-shadow:0 1px #e0b040;letter-spacing:3.9px">JFMAMJJASOND</div></div>
<div class="abs sunken" style="left:1524px;top:206px;width:70px;height:20px"></div>
<div class="t" style="left:1530px;top:210px;">3 /21</div>
<div class="abs raised" style="left:1577px;top:208px;width:15px;height:16px"><svg class="abs" style="left:4px;top:6px" width="8" height="4"><path d="M0,0H7L3.5,3.5Z" fill="#000"/></svg></div>
<div class="groove" style="left:1368px;top:234px;width:227px"></div>
<div class="t" style="left:1370px;top:245px;">Light</div>
<div class="abs sunken1" style="left:1400px;top:248px;width:118px;height:9px;padding:1px"><div style="width:100%;height:100%;background:linear-gradient(90deg,#000,#fff)"></div></div>
<div class="abs raised1" style="left:1498px;top:246px;width:5px;height:13px"></div>
<div class="abs sunken" style="left:1523px;top:244px;width:38px;height:22px"></div>
<div class="t" style="left:1528px;top:249px;">88</div>
<div class="spinb" style="left:1548px;top:246px;height:9px"><svg class="abs" style="left:3px;top:3px" width="5" height="3"><path d="M0,3H5L2.5,0.5Z" fill="#000"/></svg></div>
<div class="spinb" style="left:1548px;top:255px;height:9px"><svg class="abs" style="left:3px;top:3px" width="5" height="3"><path d="M0,0H5L2.5,2.5Z" fill="#000"/></svg></div>
<div class="t" style="left:1370px;top:272px;">Dark</div>
<div class="abs sunken1" style="left:1400px;top:275px;width:118px;height:9px;padding:1px"><div style="width:100%;height:100%;background:linear-gradient(90deg,#000,#fff)"></div></div>
<div class="abs raised1" style="left:1405px;top:273px;width:5px;height:13px"></div>
<div class="abs sunken" style="left:1523px;top:270px;width:38px;height:22px"></div>
<div class="t" style="left:1528px;top:275px;">5</div>
<div class="spinb" style="left:1548px;top:272px;height:9px"><svg class="abs" style="left:3px;top:3px" width="5" height="3"><path d="M0,3H5L2.5,0.5Z" fill="#000"/></svg></div>
<div class="spinb" style="left:1548px;top:281px;height:9px"><svg class="abs" style="left:3px;top:3px" width="5" height="3"><path d="M0,0H5L2.5,2.5Z" fill="#000"/></svg></div>
<div class="groove" style="left:1368px;top:297px;width:227px"></div>
<div class="cb" style="left:1370px;top:302px"></div>
<div class="t" style="left:1389px;top:304px;">Use sun for shading</div>
<div class="t" style="left:1371px;top:321px;">Display:</div>
<div class="cb" style="left:1370px;top:336px"><svg width="7" height="7" viewBox="0 0 7 7"><path d="M0,2 0,4 2,6 2.5,6 7,1.5 7,0 6.5,0 2.5,4 0.5,2Z" fill="#000"/></svg></div>
<div class="t" style="left:1389px;top:338px;">On faces</div>
<div class="cb" style="left:1437px;top:336px"><svg width="7" height="7" viewBox="0 0 7 7"><path d="M0,2 0,4 2,6 2.5,6 7,1.5 7,0 6.5,0 2.5,4 0.5,2Z" fill="#000"/></svg></div>
<div class="t" style="left:1456px;top:338px;">On ground</div>
<div class="cb" style="left:1515px;top:336px"></div>
<div class="t" style="left:1534px;top:338px;">From edges</div>
<div class="panel" style="left:1366px;top:366px;width:235px;height:383px"></div>
<div class="ptitle" style="left:1369px;top:369px;width:228px">Scenes</div>
<div class="xbtn" style="left:1583px;top:371px"><svg class="abs" style="left:2px;top:2px" width="7" height="6"><path d="M0.5,0 6,6M6,0 0.5,6" stroke="#000" stroke-width="1.4"/></svg></div>
<svg class="abs" style="left:1370px;top:386px" width="228" height="24" viewBox="0 0 228 24"><g fill="none" stroke="#000" stroke-width="2.2"><path d="M6.5,13.5A6,6 0 0 1 16.5,8.5"/><path d="M18.5,11.5A6,6 0 0 1 8.5,16.5"/></g><path d="M13.5,5 19.5,5.5 18,11Z M11.5,20 5.5,19.5 7,14Z" fill="#000"/><circle cx="36.5" cy="12.5" r="7.3" fill="#fff" stroke="#000" stroke-width="1.5"/><path d="M32,12.5H41M36.5,8V17" stroke="#000" stroke-width="2"/><circle cx="60.5" cy="12.5" r="7.3" fill="#fff" stroke="#000" stroke-width="1.5"/><path d="M56,12.5H65" stroke="#000" stroke-width="2"/><path d="M116,5.500Q111.500,5 111.500,9V14" fill="none" stroke="#000" stroke-width="2.600"/><path d="M106.500,12.500H116.500L111.500,18.500Z" fill="#000"/><path d="M131,17.500Q135,18 135,14V9" fill="none" stroke="#000" stroke-width="2.600"/><path d="M130,10.500H140L135,4Z" fill="#000"/><g fill="none" stroke="#000" stroke-width="1.200"><rect x="152.500" y="7.500" width="4" height="4"/><rect x="152.500" y="13.500" width="4" height="4"/><path d="M158,7.500H166M158,9.500H166M158,13.500H166M158,15.500H166"/></g><path d="M169,11H176L172.500,14.500Z" fill="#444"/><rect x="185.500" y="3.500" width="12" height="17" fill="#fff" stroke="#d4d0c8"/><rect x="186" y="4" width="11" height="9" fill="#000"/><rect x="188" y="7" width="7" height="2" fill="#fff"/><path d="M187,19H196L191.500,14.500Z" fill="#000"/><path d="M215,4V21L223,12.500Z" fill="#000"/><rect x="210.500" y="8.500" width="6" height="8" fill="#fff" stroke="#1a3a9a" stroke-width="1"/><path d="M212,11H215M212,13H215" stroke="#1a3a9a" stroke-width="1"/></svg>
<div class="abs" style="left:1370px;top:412px;width:227px;height:123px;background:#fff;overflow:hidden"><div class="abs" style="left:0;top:-21px;width:210px;height:70px;border:3px solid #0a246a;background:#fff"><div class="abs" style="left:1px;top:0;width:64px;height:64px;background:#a0a0a0"><div style="width:64px;height:48px;background:#000"></div></div><div class="t" style="left:68px;top:15px">Photo: <i style="color:#909090">None</i></div><div class="t" style="left:68px;top:28px"><i style="color:#909090">No Description</i></div></div><div class="abs" style="left:0;top:53px;width:210px;height:70px;border:3px solid #0a246a;background:#fff"><div class="abs" style="left:1px;top:0;width:64px;height:64px;background:#a0a0a0"><svg class="abs" style="left:50px;top:48px" width="13" height="14"><path d="M1,13 11,2" stroke="#d01010" stroke-width="2.2"/><path d="M1,13 3,11" stroke="#222" stroke-width="1.6"/></svg></div><div class="t" style="left:67px;top:2px;letter-spacing:0.12px">Spring Equinox 20:00</div><div class="t" style="left:68px;top:15px">Photo: <i style="color:#909090">None</i></div><div class="t" style="left:68px;top:28px"><i style="color:#909090">No Description</i></div></div><div class="abs" style="left:211px;top:0;width:16px;height:123px;background:repeating-conic-gradient(#fff 0 25%,#d4d0c8 0 50%) 0 0/2px 2px"></div><div class="abs raised" style="left:211px;top:0;width:16px;height:16px"><svg class="abs" style="left:4px;top:6px" width="8" height="4"><path d="M0,4H7L3.500,0.500Z" fill="#000"/></svg></div><div class="abs raised" style="left:211px;top:50px;width:16px;height:16px"></div><div class="abs raised" style="left:211px;top:107px;width:16px;height:16px"><svg class="abs" style="left:4px;top:6px" width="8" height="4"><path d="M0,0H7L3.500,3.500Z" fill="#000"/></svg></div></div>
<div class="abs" style="left:1369px;top:411px;width:229px;height:1px;background:#808080"></div>
<div class="cb" style="left:1441px;top:547px"><svg width="7" height="7" viewBox="0 0 7 7"><path d="M0,2 0,4 2,6 2.5,6 7,1.5 7,0 6.5,0 2.5,4 0.5,2Z" fill="#000"/></svg></div>
<div class="t" style="left:1460px;top:549px;"><u>I</u>nclude in animation</div>
<div class="t" style="left:1380px;top:574px;width:56px;text-align:right">Name:</div>
<div class="abs sunken" style="left:1441px;top:567px;width:151px;height:18px"></div>
<div class="t" style="left:1445px;top:570px;">Spring Equinox 20:00</div>
<div class="t" style="left:1370px;top:595px;width:66px;text-align:right">Description:</div>
<div class="abs sunken" style="left:1441px;top:589px;width:151px;height:19px"></div>
<div class="t" style="left:1370px;top:614px;width:66px;text-align:right">Properties</div>
<div class="t" style="left:1370px;top:627px;width:66px;text-align:right">to save:</div>
<div class="cb" style="left:1439px;top:616px"><svg width="7" height="7" viewBox="0 0 7 7"><path d="M0,2 0,4 2,6 2.5,6 7,1.5 7,0 6.5,0 2.5,4 0.5,2Z" fill="#000"/></svg></div>
<div class="t" style="left:1458px;top:618px;">Camera Location</div>
<div class="cb" style="left:1439px;top:634px"><svg width="7" height="7" viewBox="0 0 7 7"><path d="M0,2 0,4 2,6 2.5,6 7,1.5 7,0 6.5,0 2.5,4 0.5,2Z" fill="#000"/></svg></div>
<div class="t" style="left:1458px;top:636px;">Hidden Geometry</div>
<div class="cb" style="left:1439px;top:652px"><svg width="7" height="7" viewBox="0 0 7 7"><path d="M0,2 0,4 2,6 2.5,6 7,1.5 7,0 6.5,0 2.5,4 0.5,2Z" fill="#000"/></svg></div>
<div class="t" style="left:1458px;top:654px;">Visible Layers</div>
<div class="cb" style="left:1439px;top:670px"><svg width="7" height="7" viewBox="0 0 7 7"><path d="M0,2 0,4 2,6 2.5,6 7,1.5 7,0 6.5,0 2.5,4 0.5,2Z" fill="#000"/></svg></div>
<div class="t" style="left:1458px;top:672px;">Active Section Planes</div>
<div class="cb" style="left:1439px;top:688px"><svg width="7" height="7" viewBox="0 0 7 7"><path d="M0,2 0,4 2,6 2.5,6 7,1.5 7,0 6.5,0 2.5,4 0.5,2Z" fill="#000"/></svg></div>
<div class="t" style="left:1458px;top:690px;">Style and Fog</div>
<div class="cb" style="left:1439px;top:706px"><svg width="7" height="7" viewBox="0 0 7 7"><path d="M0,2 0,4 2,6 2.5,6 7,1.5 7,0 6.5,0 2.5,4 0.5,2Z" fill="#000"/></svg></div>
<div class="t" style="left:1458px;top:708px;">Shadow Settings</div>
<div class="cb" style="left:1439px;top:724px"><svg width="7" height="7" viewBox="0 0 7 7"><path d="M0,2 0,4 2,6 2.5,6 7,1.5 7,0 6.5,0 2.5,4 0.5,2Z" fill="#000"/></svg></div>
<div class="t" style="left:1458px;top:726px;">Axes Location</div>
<div class="panel" style="left:1601px;top:130px;width:316px;height:947px"></div>
<div class="ptitle" style="left:1605px;top:133px;width:308px">Layers</div>
<div class="xbtn" style="left:1899px;top:135px"><svg class="abs" style="left:2px;top:2px" width="7" height="6"><path d="M0.5,0 6,6M6,0 0.5,6" stroke="#000" stroke-width="1.4"/></svg></div>
<svg class="abs" style="left:1608px;top:152px" width="50" height="22" viewBox="0 0 50 22"><circle cx="10.500" cy="10.500" r="7.300" fill="#fff" stroke="#000" stroke-width="1.500"/><path d="M6,10.500H15M10.500,6V15" stroke="#000" stroke-width="2"/><circle cx="34.500" cy="10.500" r="7.300" fill="#fff" stroke="#000" stroke-width="1.500"/><path d="M30,10.500H39" stroke="#000" stroke-width="2"/></svg>
<svg class="abs" style="left:1893px;top:152px" width="16" height="20" viewBox="0 0 16 20"><path d="M7,1.500V18.500L15,10Z" fill="#000"/><rect x="2.500" y="6.500" width="6" height="8" fill="#fff" stroke="#1a3a9a" stroke-width="1"/><path d="M4,9H7M4,11H7" stroke="#1a3a9a" stroke-width="1"/></svg>
<div class="abs" style="left:1605px;top:176px;width:308px;height:898px;background:#fff"></div>
<div class="abs raised" style="left:1605px;top:176px;width:218px;height:17px"></div>
<div class="abs raised" style="left:1823px;top:176px;width:49px;height:17px"></div>
<div class="abs raised" style="left:1872px;top:176px;width:41px;height:17px"></div>
<div class="t" style="left:1612px;top:179px;">Name</div>
<div class="t" style="left:1829px;top:179px;">Visible</div>
<div class="t" style="left:1880px;top:179px;">C...</div>
<svg class="abs" style="left:1654px;top:181px" width="9" height="8"><path d="M0.500,0.500H8" stroke="#808080"/><path d="M0.500,0.500 4,7.500" stroke="#808080"/><path d="M8,0.500 4.500,7.500" stroke="#fff"/></svg>
<div class="rad on" style="top:196px"></div>
<div class="t" style="left:1624px;top:196px;">Layer0</div>
<div class="lcb" style="left:1842px;top:196px"><svg width="9" height="9" viewBox="0 0 9 9"><path d="M0.500,3.500 0.500,5.500 3,8 3.500,8 8.500,2.500 8.500,0.500 8,0.500 3.200,5.500 1,3.500Z" fill="#000"/></svg></div>
<div class="sw" style="top:194px;background:#03699f"></div>
<div class="rad" style="top:213px"></div>
<div class="t" style="left:1624px;top:213px;">2D Existing trees and shrubs</div>
<div class="lcb" style="left:1842px;top:213px"><svg width="9" height="9" viewBox="0 0 9 9"><path d="M0.500,3.500 0.500,5.500 3,8 3.500,8 8.500,2.500 8.500,0.500 8,0.500 3.200,5.500 1,3.500Z" fill="#000"/></svg></div>
<div class="sw" style="top:211px;background:#991414"></div>
<div class="rad" style="top:230px"></div>
<div class="t" style="left:1624px;top:230px;">2D Phase 1 new trees and shrubs</div>
<div class="lcb" style="left:1842px;top:230px"></div>
<div class="sw" style="top:228px;background:#009987"></div>
<div class="rad" style="top:247px"></div>
<div class="t" style="left:1624px;top:247px;">2D Phase 2 new trees and shrubs</div>
<div class="lcb" style="left:1842px;top:247px"></div>
<div class="sw" style="top:245px;background:#004c88"></div>
<div class="rad" style="top:264px"></div>
<div class="t" style="left:1624px;top:264px;">Key</div>
<div class="lcb" style="left:1842px;top:264px"></div>
<div class="sw" style="top:262px;background:#cc4400"></div>
<div class="rad" style="top:281px"></div>
<div class="t" style="left:1624px;top:281px;">Layer1</div>
<div class="lcb" style="left:1842px;top:281px"></div>
<div class="sw" style="top:279px;background:#664400"></div>
<div class="rad" style="top:298px"></div>
<div class="t" style="left:1624px;top:298px;">New beds</div>
<div class="lcb" style="left:1842px;top:298px"></div>
<div class="sw" style="top:296px;background:#664400"></div>
<div class="rad" style="top:315px"></div>
<div class="t" style="left:1624px;top:315px;">New Hugle bed</div>
<div class="lcb" style="left:1842px;top:315px"></div>
<div class="sw" style="top:313px;background:#787899"></div>
<div class="rad" style="top:332px"></div>
<div class="t" style="left:1624px;top:332px;">New Paths</div>
<div class="lcb" style="left:1842px;top:332px"></div>
<div class="sw" style="top:330px;background:#f2b87c"></div>
<div class="rad" style="top:349px"></div>
<div class="t" style="left:1624px;top:349px;">New Phase 1 Labels</div>
<div class="lcb" style="left:1842px;top:349px"></div>
<div class="sw" style="top:347px;background:#aa4400"></div>
<div class="rad" style="top:366px"></div>
<div class="t" style="left:1624px;top:366px;">New Phase 2 labels</div>
<div class="lcb" style="left:1842px;top:366px"></div>
<div class="sw" style="top:364px;background:#787899"></div>
<div class="rad" style="top:383px"></div>
<div class="t" style="left:1624px;top:383px;">New Pond</div>
<div class="lcb" style="left:1842px;top:383px"></div>
<div class="sw" style="top:381px;background:#00ffff"></div>
<div class="rad" style="top:400px"></div>
<div class="t" style="left:1624px;top:400px;">New slug free planters</div>
<div class="lcb" style="left:1842px;top:400px"></div>
<div class="sw" style="top:398px;background:#009987"></div>
<div class="rad" style="top:417px"></div>
<div class="t" style="left:1624px;top:417px;">Old flower bed</div>
<div class="lcb" style="left:1842px;top:417px"></div>
<div class="sw" style="top:415px;background:#787899"></div>
<div class="rad" style="top:434px"></div>
<div class="t" style="left:1624px;top:434px;">Old Gate</div>
<div class="lcb" style="left:1842px;top:434px"><svg width="9" height="9" viewBox="0 0 9 9"><path d="M0.500,3.500 0.500,5.500 3,8 3.500,8 8.500,2.500 8.500,0.500 8,0.500 3.200,5.500 1,3.500Z" fill="#000"/></svg></div>
<div class="sw" style="top:432px;background:#664400"></div>
<div class="rad" style="top:451px"></div>
<div class="t" style="left:1624px;top:451px;">Old Labels</div>
<div class="lcb" style="left:1842px;top:451px"></div>
<div class="sw" style="top:449px;background:#009987"></div>
<div class="rad" style="top:468px"></div>
<div class="t" style="left:1624px;top:468px;">Old Lawn</div>
<div class="lcb" style="left:1842px;top:468px"></div>
<div class="sw" style="top:466px;background:#a000ff"></div>
<div class="rad" style="top:485px"></div>
<div class="t" style="left:1624px;top:485px;">Old Removble fence</div>
<div class="lcb" style="left:1842px;top:485px"><svg width="9" height="9" viewBox="0 0 9 9"><path d="M0.500,3.500 0.500,5.500 3,8 3.500,8 8.500,2.500 8.500,0.500 8,0.500 3.200,5.500 1,3.500Z" fill="#000"/></svg></div>
<div class="sw" style="top:483px;background:#787899"></div>
<div class="abs" style="left:0;top:1152px;width:1920px;height:28px;background:#d4d0c8;border-top:1px solid #fff;box-shadow:inset 0 1px #eceae2"></div>
<svg class="abs" style="left:0;top:1156px" width="124" height="24" viewBox="0 0 124 24"><circle cx="13" cy="12" r="8.500" fill="#f4ead0" stroke="#8a5a1a" stroke-width="2"/><circle cx="13" cy="9.500" r="3" fill="#f05048"/><path d="M13,12V17.500" stroke="#c83030" stroke-width="1.600"/><circle cx="41" cy="12" r="8.500" fill="#f4ead0" stroke="#8a5a1a" stroke-width="2"/><circle cx="41" cy="7.500" r="1.800" fill="#000"/><path d="M38.500,10H43.500V14H42.500V18H39.500V14H38.500Z" fill="#000"/><circle cx="69" cy="12" r="8.500" fill="#f4ead0" stroke="#8a5a1a" stroke-width="2"/><text x="63.800" y="17" font-family="Liberation Serif,serif" font-size="14.500" fill="#7a7868">G</text><path d="M88.500,2V22" stroke="#808080"/><path d="M89.500,2V22" stroke="#fff"/><circle cx="107" cy="12.500" r="9" fill="#e8f0fc" stroke="#1c4a6c" stroke-width="2.200"/></svg>
<div class="t" style="left:102px;top:1160px;font-size:16px;font-weight:bold;line-height:17px;height:17px;letter-spacing:0">?</div>
<div class="t" style="left:124px;top:1161px;font-size:13px;line-height:15px;height:15px;letter-spacing:0">Select objects. Shift to extend select. Drag mouse to select multiple.</div>
<div class="abs" style="left:1575px;top:1157px;width:2px;height:21px;border-left:1px solid #808080;border-right:1px solid #fff"></div>
<div class="t" style="left:1625px;top:1161px;font-size:13px;line-height:15px;height:15px;letter-spacing:0">Measurements</div>
<div class="abs sunken1" style="left:1714px;top:1156px;width:204px;height:23px"></div>
</div></body></html>
